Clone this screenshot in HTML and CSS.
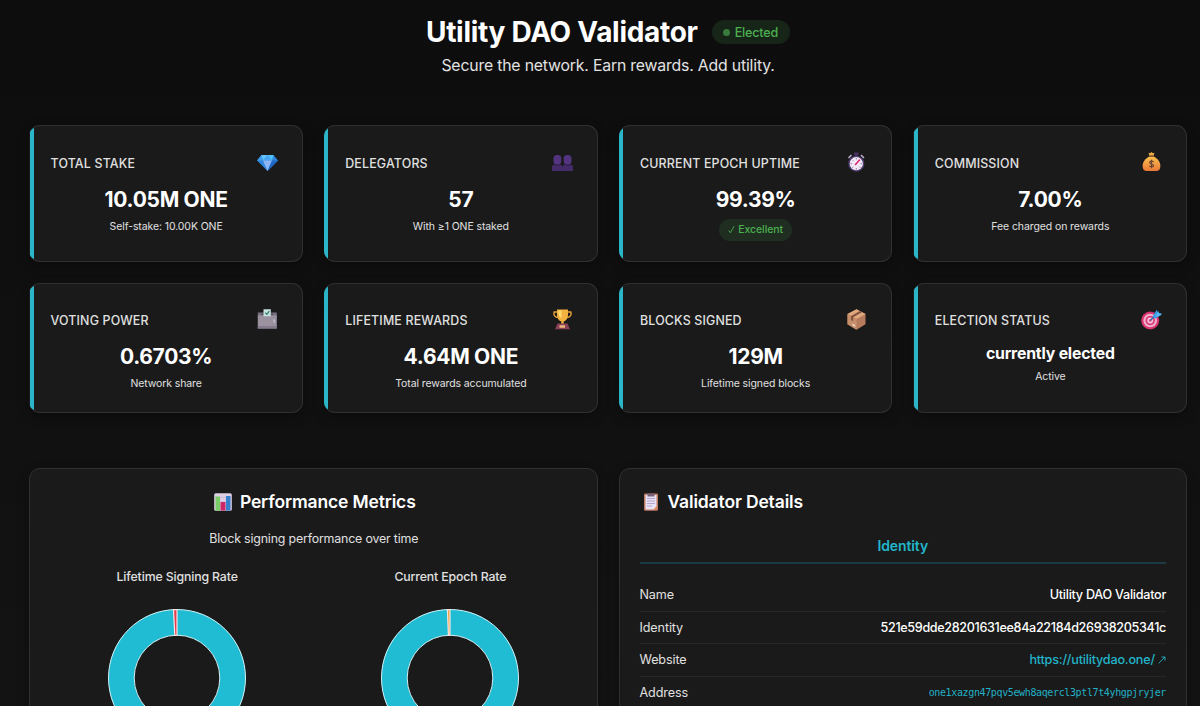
FILE: index.html
```html
<!DOCTYPE html>
<html lang="en">
<head>
  <meta charset="utf-8">
  <title>Utility DAO Validator</title>
  <link rel="stylesheet" href="styles.css">
</head>
<body>

  <header class="page-header">
    <div class="title-row">
      <h1>Utility DAO Validator</h1>
      <span class="status-pill"><i class="dot"></i>Elected</span>
    </div>
    <p class="tagline">Secure the network. Earn rewards. Add utility.</p>
  </header>

  <main class="container">

    <section class="stats">
      <div class="card">
        <div class="card-head">
          <h3>Total Stake</h3>
          <svg class="icon" viewBox="0 0 21 21">
            <path d="M4.5 3h12L21 8.5 10.5 19 0 8.5z" fill="#2f86dc"/>
            <path d="M4.5 3 6 8.5H0z" fill="#3d9cec"/>
            <path d="M4.5 3h6L6 8.5z" fill="#67c4fb"/>
            <path d="M10.5 3 15 8.5H6z" fill="#4aa5f2"/>
            <path d="M10.5 3h6L15 8.5z" fill="#4fc3fa"/>
            <path d="M6 8.5h9L10.5 19z" fill="#8db5f3"/>
            <path d="M15 8.5h6L10.5 19z" fill="#1f68c8"/>
          </svg>
        </div>
        <div class="value">10.05M ONE</div>
        <div class="sub">Self-stake: 10.00K ONE</div>
      </div>

      <div class="card">
        <div class="card-head">
          <h3>Delegators</h3>
          <svg class="icon" viewBox="0 0 21 21">
            <path d="M0 19v-3.500q0-3 3-3h4q3.500 0 3.500 3V19zM10.500 19v-3.500q0-3 3.500-3h4q3 0 3 3V19z" fill="#462b6b"/>
            <path d="M3 10.500h4.500v3.500H3zM13.500 10.500H18v3.500h-4.500z" fill="#352052"/>
            <rect x="1.500" y="3" width="7.800" height="9.500" rx="3.500" fill="#533481"/>
            <rect x="11.700" y="3" width="7.800" height="9.500" rx="3.500" fill="#533481"/>
          </svg>
        </div>
        <div class="value">57</div>
        <div class="sub">With ≥1 ONE staked</div>
      </div>

      <div class="card">
        <div class="card-head">
          <h3>Current Epoch Uptime</h3>
          <svg class="icon" viewBox="0 0 21 21">
            <path d="M8 .5h4.500V3H8zM9.300 2h2v3h-2z" fill="#493166"/>
            <path d="M3 5.500 5 3.500M15.500 3.500l2 2" stroke="#b8a8cc" stroke-width="1.700" stroke-linecap="round"/>
            <circle cx="10.300" cy="11.700" r="8" fill="#503f74"/>
            <circle cx="10.300" cy="11.700" r="6.600" fill="#f0e8f5"/>
            <path d="M10.300 6v1.500M10.300 16v1.500M4.600 11.700h1.500M14.500 11.700H16M6.300 7.700l1 1M13.300 14.700l1 1M6.300 15.700l1-1" stroke="#8d779e"/>
            <path d="m9.500 12.500 4-4.500" stroke="#e02872" stroke-width="1.600" stroke-linecap="round"/>
          </svg>
        </div>
        <div class="value">99.39%</div>
        <span class="badge"><svg class="check" viewBox="0 0 8 10"><path d="M.8 6 2.800 8.800 7 1"/></svg>Excellent</span>
      </div>

      <div class="card">
        <div class="card-head">
          <h3>Commission</h3>
          <svg class="icon" viewBox="0 0 21 21">
            <defs>
              <linearGradient id="bag" x1="0" y1="0" x2="0" y2="1">
                <stop offset="0" stop-color="#fbc04e"/>
                <stop offset="1" stop-color="#e87838"/>
              </linearGradient>
            </defs>
            <path d="m7.500.8 1.500.5L10.500 0l1.500 1.300 1.500-.5-.9 3.200H8.400z" fill="#e9ab42"/>
            <path d="M8.400 4.500h4.200c4 2 6.800 5.500 6.800 9.500 0 3-1.500 5-4 5H5.600c-2.500 0-4-2-4-5 0-4 2.800-7.500 6.800-9.500z" fill="url(#bag)"/>
            <rect x="7.800" y="3.200" width="5.400" height="1.800" rx=".9" fill="#8a5938"/>
            <path d="M12.500 10c-.5-1.100-3.900-1.200-3.900.5s3.900 1 3.900 2.900-3.400 1.800-4.100.4M10.500 7.700v8.600" fill="none" stroke="#6b4434" stroke-width="1.200"/>
          </svg>
        </div>
        <div class="value">7.00%</div>
        <div class="sub">Fee charged on rewards</div>
      </div>

      <div class="card">
        <div class="card-head">
          <h3>Voting Power</h3>
          <svg class="icon" viewBox="0 0 21 21">
            <path d="M.8 3.500h19v5h-19z" fill="#777180"/>
            <path d="M.8 6.500h19v13h-19z" fill="#9a929f"/>
            <path d="M.8 17h19v2.500h-19z" fill="#857b8c"/>
            <path d="M4.500 4.500h11.500v1.500H4.500z" fill="#514b58"/>
            <path d="M6.500.2h7.300v7H6.500z" fill="#c8e3df"/>
            <path d="m8.300 3.700 1.500 1.600 2.500-3.200" fill="none" stroke="#287567" stroke-width="1.100"/>
            <path d="M16 10.500h2v3.500h-1z" fill="#c3bbca"/>
          </svg>
        </div>
        <div class="value">0.6703%</div>
        <div class="sub">Network share</div>
      </div>

      <div class="card">
        <div class="card-head">
          <h3>Lifetime Rewards</h3>
          <svg class="icon" viewBox="0 0 21 21">
            <path d="M5 3H2.200C1 6 3 8.500 6.500 8.500M16 3h2.800c1.200 3-.8 5.500-4.300 5.500" fill="none" stroke="#e9a136" stroke-width="1.500"/>
            <path d="M5 .5h11V6c0 3.500-2 5.800-4.300 6.500V15H9.300v-2.500C7 11.800 5 9.500 5 6z" fill="#f1b23f"/>
            <path d="M6.500 1.500h3V9C7.500 8 6.500 6 6.500 4z" fill="#ffda72"/>
            <path d="M5.500 14.500h10l2.500 5.700H3z" fill="#8a4356"/>
            <path d="M7.500 16.300h5.500v2.500H7.500z" fill="#f2b77f"/>
          </svg>
        </div>
        <div class="value">4.64M ONE</div>
        <div class="sub">Total rewards accumulated</div>
      </div>

      <div class="card">
        <div class="card-head">
          <h3>Blocks Signed</h3>
          <svg class="icon" viewBox="0 0 21 21">
            <path d="m10.500.2 9 4.800v10.200l-9 5.600-9-5.600V5z" fill="#b77b5d"/>
            <path d="m10.500.2 9 4.800-9 5-9-5z" fill="#e0aa80"/>
            <path d="m1.500 5 9 5v10.800l-9-5.600z" fill="#c78e6b"/>
            <path d="m13.800 2 2.200 1.200-8.800 5v4L5 11V7z" fill="#85543e"/>
            <path d="m6.500 14.500 2.700 1.600v2L6.500 16.500z" fill="#ecd9cc"/>
          </svg>
        </div>
        <div class="value">129M</div>
        <div class="sub">Lifetime signed blocks</div>
      </div>

      <div class="card">
        <div class="card-head">
          <h3>Election Status</h3>
          <svg class="icon" viewBox="0 0 21 21">
            <circle cx="9.200" cy="11.500" r="9" fill="#d93571"/>
            <circle cx="9.200" cy="11.500" r="6.800" fill="#f0b4ce"/>
            <circle cx="9.200" cy="11.500" r="4.800" fill="#dc3f7b"/>
            <circle cx="9.200" cy="11.500" r="2.900" fill="#f3c6dc"/>
            <circle cx="9.200" cy="11.500" r="1.300" fill="#dc3f7b"/>
            <path d="m9.500 11.200 6-6" stroke="#276aa8" stroke-width="1.300"/>
            <path d="m11.500 7.500 4.300-6.800 1.200 3 3.800.8-6.500 5.200z" fill="#3f9fe5"/>
            <path d="M15 6.500 17.500 2l.5 2.500 3 1-4.500 2.500z" fill="#55baf7"/>
          </svg>
        </div>
        <div class="value value-text">currently elected</div>
        <div class="sub">Active</div>
      </div>
    </section>

    <section class="panels">
      <div class="panel metrics">
        <h2>
          <svg class="h-icon" viewBox="0 0 18 18">
            <rect x=".2" y=".2" width="17.600" height="17.600" rx="1.500" fill="#ddd0e5"/>
            <path d="M0 4.500h18M0 9h18M0 13.500h18" stroke="#c3b2cf" stroke-width=".7"/>
            <path d="M1.500 3.500h4.500v14H1.500z" fill="#78cd66"/>
            <path d="M6.500 9h5v8.500h-5z" fill="#cc2868"/>
            <path d="M12 3h4.500v14.500H12z" fill="#3681cd"/>
          </svg>
          Performance Metrics
        </h2>
        <p class="lead">Block signing performance over time</p>
        <div class="charts">
          <div class="chart">
            <h4>Lifetime Signing Rate</h4>
            <svg class="donut" viewBox="-70 -70 140 140">
              <circle r="55.700" fill="none" stroke="#1fbcd3" stroke-width="25.700"/>
              <circle class="rim" r="68.500"/>
              <circle class="rim" r="42.800"/>
              <path class="slice" d="M-3.500-68.400A68.500 68.500 0 0 1 0-68.500V-42.800A42.800 42.800 0 0 0-2.200-42.700z" fill="#e5384a"/>
            </svg>
          </div>
          <div class="chart">
            <h4>Current Epoch Rate</h4>
            <svg class="donut" viewBox="-70 -70 140 140">
              <circle r="55.700" fill="none" stroke="#1fbcd3" stroke-width="25.700"/>
              <circle class="rim" r="68.500"/>
              <circle class="rim" r="42.800"/>
              <path class="slice" d="M-2.600-68.400A68.500 68.500 0 0 1 0-68.500V-42.800A42.800 42.800 0 0 0-1.600-42.700z" fill="#f39a2e"/>
            </svg>
          </div>
        </div>
      </div>

      <div class="panel details">
        <h2>
          <svg class="h-icon" viewBox="0 0 18 18">
            <rect x="2" y=".5" width="14" height="17.300" rx="1.200" fill="#bd7b61"/>
            <path d="M3.500 2h11v11.500l-3 3h-8z" fill="#e9e1f4"/>
            <path d="M14.500 13.500v3h-3z" fill="#ed9460"/>
            <path d="M5 5.500h8M5 8h8M5 10.500h8M5 13h5" stroke="#aaa0cb" stroke-width=".9"/>
            <path d="M5.500.5h7v3h-7z" fill="#796078"/>
          </svg>
          Validator Details
        </h2>
        <h3 class="group-title">Identity</h3>
        <dl class="rows">
          <div class="row"><dt>Name</dt><dd class="name">Utility DAO Validator</dd></div>
          <div class="row"><dt>Identity</dt><dd>521e59dde28201631ee84a22184d26938205341c</dd></div>
          <div class="row"><dt>Website</dt><dd><a class="link" href="#">https://utilitydao.one/ <svg class="arrow" viewBox="0 0 8 8"><path d="M.7 7.300 7 1M3.500 1H7v3.500"/></svg></a></dd></div>
          <div class="row"><dt>Address</dt><dd class="mono">one1xazgn47pqv5ewh8aqercl3ptl7t4yhgpjryjer</dd></div>
        </dl>
      </div>
    </section>

  </main>

</body>
</html>
```
FILE: styles.css
```css
* { box-sizing: border-box; }

html { background: #0e0e0e; }

body {
  margin: 0;
  height: 706px;
  overflow: hidden;
  background: linear-gradient(180deg, #0d0d0d, #131313);
  color: #fff;
  font-family: Inter, "Liberation Sans", sans-serif;
}

h1, h2, h3, h4, p, dl, dd { margin: 0; }

.page-header {
  height: 125px;
  padding: 14px 0 0 16px;
  text-align: center;
}

.title-row {
  display: flex;
  justify-content: center;
  align-items: center;
  gap: 14px;
  height: 36px;
}

h1 {
  font-size: 28px;
  font-weight: 700;
  letter-spacing: -.3px;
  line-height: 36px;
}

.status-pill {
  display: flex;
  align-items: center;
  gap: 5px;
  height: 24px;
  padding: 0 12px 0 11px;
  border-radius: 12px;
  background: #172519;
  color: #4caf50;
  font-size: 12.600px;
  font-weight: 500;
  letter-spacing: -.2px;
}

.dot {
  width: 7px;
  height: 7px;
  border-radius: 50%;
  background: #397b3c;
}

.tagline {
  padding-top: 4px;
  color: #e2e2e2;
  font-size: 15.800px;
  letter-spacing: -.18px;
  line-height: 24px;
}

.container {
  width: 1158px;
  margin-left: 29px;
}

.stats {
  display: grid;
  grid-template-columns: repeat(4, 1fr);
  grid-template-rows: 137px 130px;
  gap: 21px;
  margin-bottom: 55px;
}

.card {
  position: relative;
  overflow: hidden;
  padding: 20px 20px 20px 21.500px;
  border: 1px solid #303030;
  border-left: 0;
  border-radius: 11px;
  background: #1a1a1a;
  box-shadow: 0 4px 12px rgba(0, 0, 0, .3);
  text-align: center;
}

.card:nth-child(-n+4) { padding-top: 21px; }

.card::before {
  content: "";
  position: absolute;
  left: .5px;
  top: 0;
  bottom: 0;
  width: 4px;
  background: #2bb5c8;
}

.card-head {
  display: flex;
  justify-content: space-between;
  align-items: center;
  height: 32px;
  padding-right: 4px;
}

.card-head h3 {
  color: #e0e0e0;
  font-size: 12.400px;
  font-weight: 500;
  letter-spacing: .17px;
  text-transform: uppercase;
}

.icon {
  width: 21px;
  height: 21px;
  margin-bottom: 2px;
}

.value {
  margin-top: 4px;
  font-size: 21px;
  font-weight: 700;
  letter-spacing: -.3px;
  line-height: 34px;
}

.value-text {
  font-size: 15.800px;
  letter-spacing: -.18px;
  line-height: 27px;
}

.sub {
  color: #e0e0e0;
  font-size: 10.500px;
  letter-spacing: -.1px;
  line-height: 19px;
}

.badge {
  display: inline-block;
  height: 22px;
  margin-top: 2px;
  padding: 0 9px;
  border-radius: 11px;
  background: #1f2e20;
  color: #4caf50;
  font-size: 10.500px;
  font-weight: 500;
  letter-spacing: -.1px;
  line-height: 22px;
}

.check {
  width: 7px;
  height: 9px;
  margin-right: 3px;
  vertical-align: -1px;
  fill: none;
  stroke: #4caf50;
  stroke-width: 1;
}

.panels {
  display: grid;
  grid-template-columns: 1fr 1fr;
  gap: 21px;
}

.panel {
  height: 420px;
  padding: 20px;
  border: 1px solid #303030;
  border-radius: 11px;
  background: #1a1a1a;
  box-shadow: 0 4px 12px rgba(0, 0, 0, .3);
}

.metrics { padding-left: 21px; }

.panel h2 {
  display: flex;
  align-items: center;
  gap: 8px;
  height: 26px;
  font-size: 17.500px;
  font-weight: 600;
  letter-spacing: -.15px;
  line-height: 24px;
}

.metrics h2 {
  justify-content: center;
  padding-left: 2px;
}

.details h2 { padding-left: 2px; }

.h-icon {
  width: 18px;
  height: 18px;
}

.lead {
  margin-top: 13px;
  color: #e0e0e0;
  font-size: 12.400px;
  letter-spacing: -.18px;
  line-height: 22px;
  text-align: center;
}

.charts {
  display: grid;
  grid-template-columns: 1fr 1fr;
  gap: 21px;
  margin-top: 16px;
}

.chart { text-align: center; }

.chart h4 {
  color: #e0e0e0;
  font-size: 12.300px;
  font-weight: 500;
  letter-spacing: -.13px;
  line-height: 22px;
}

.donut {
  display: block;
  width: 140px;
  height: 140px;
  margin: 19.500px auto 0;
}

.rim {
  fill: none;
  stroke: #d5f0f4;
  stroke-width: 1;
}

.slice {
  stroke: #f4e6e6;
  stroke-width: 1.200;
}

.group-title {
  height: 49px;
  padding-top: 20px;
  border-bottom: 2px solid #1c3a44;
  color: #22b5cb;
  font-size: 14px;
  font-weight: 600;
  letter-spacing: -.1px;
  line-height: 22px;
  text-align: center;
}

.rows { padding-top: 15px; }

.row {
  display: flex;
  justify-content: space-between;
  align-items: center;
  height: 32.600px;
  border-bottom: 1px solid #262626;
  font-size: 12.600px;
}

.row dt {
  color: #e0e0e0;
  letter-spacing: -.12px;
}

.row dd {
  font-weight: 500;
  letter-spacing: -.34px;
}

.row .name { letter-spacing: -.26px; }

.row .link {
  color: #22b5cb;
  letter-spacing: -.2px;
  text-decoration: none;
}

.arrow {
  width: 8px;
  height: 8px;
  fill: none;
  stroke: #22b5cb;
  stroke-width: .9;
}

.row .mono {
  color: #22b0c5;
  font-family: "DejaVu Sans Mono", monospace;
  font-size: 10px;
  font-weight: 400;
  letter-spacing: -.37px;
}
```
